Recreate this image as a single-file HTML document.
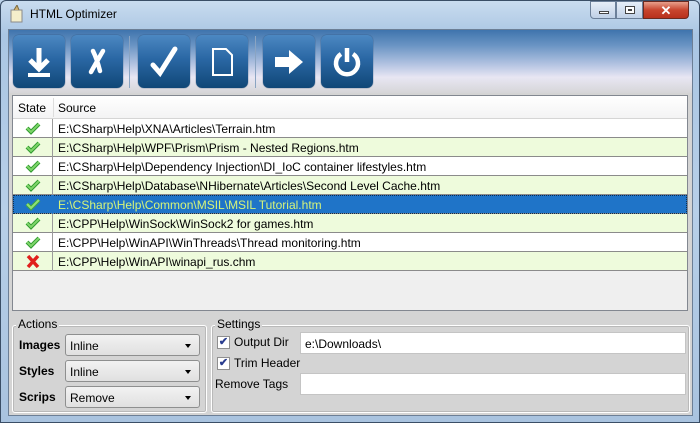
<!DOCTYPE html>
<html><head><style>
*{margin:0;padding:0;box-sizing:border-box}
body{width:700px;height:423px;overflow:hidden;font-family:"Liberation Sans",sans-serif;font-size:11.5px;color:#000;background:#bcd3ea;position:relative}
.frame{position:absolute;left:0;top:0;width:700px;height:423px;border-radius:6px 6px 0 0;background:linear-gradient(180deg,#c9dcef 0%,#aac6e3 8%,#b7cfe8 50%,#a9c3df 100%);border:1px solid #3a4e66}
.title{position:absolute;left:30px;top:7px;font-size:12px;color:#000}
.client{position:absolute;left:8px;top:29px;width:685px;height:387px;background:#d4d4d4;border:1px solid #6c7f96}
.tb{position:absolute;left:0;top:0;width:683px;height:63px;background:linear-gradient(180deg,#3f74ad 0%,#6b95c4 25%,#b4c4e2 55%,#e8e6f3 75%,#d6d6d8 100%)}
.btn{position:absolute;top:5px;width:52px;height:53px;border-radius:6px;background:linear-gradient(180deg,#4c88c2 0%,#2a67a4 45%,#104777 100%);box-shadow:0 0 1px #1b3c60}
.sep{position:absolute;top:6px;width:1px;height:52px;background:#8aa4c2}
.list{position:absolute;left:3px;top:65px;width:676px;height:216px;background:#efefef;border:1px solid #828790}
.hdr{position:absolute;left:0;top:0;width:674px;height:23px;background:linear-gradient(#fff,#f3f3f4);border-bottom:1px solid #d5d5d5;font-size:12px}
.hdr span{position:absolute;top:5px}
.row{position:absolute;left:0;width:674px;height:19px;border-bottom:1px solid #8b8b8b}
.row .t{position:absolute;left:45px;top:3px;white-space:nowrap;font-size:12px}
.row .c{position:absolute;left:39px;top:0;width:1px;height:19px;background:#9a9a9a}
.row svg{position:absolute;left:12px;top:2px}
.w{background:#fff}.g{background:#eefbdc}
.s{background:#1f74c8;color:#d6f47a;outline:1px dotted #0c2c50;outline-offset:-1px}
.gb{position:absolute;border:1px solid #fff;box-shadow:inset 0 0 0 1px #b9b9b9;border-radius:3px}
.gl{position:absolute;background:#d4d4d4;padding:0 2px;font-size:12px}
.lbl{position:absolute;font-weight:bold;font-size:12px}
.sel{position:absolute;left:56px;width:135px;height:22px;border:1px solid #8e8f8f;border-radius:3px;background:linear-gradient(#f2f2f2,#e0e0e0);padding:4px 0 0 4px;font-size:12px}
.sel:after{content:"";position:absolute;right:8px;top:9px;border:3.5px solid transparent;border-top:4px solid #000}
.chk{position:absolute;width:13px;height:13px;border:1px solid #8f8f8f;background:#fff;font-size:11px;line-height:11px;text-align:center;color:#2a3d8f;font-weight:bold}
.tx{position:absolute;background:#fff;border:1px solid #c4c4c4;height:22px;padding:4px 4px;font-size:12px}
</style></head><body>
<div class="frame"></div>
<svg style="position:absolute;left:9px;top:5px" width="16" height="18"><rect x="2" y="5" width="11" height="12" fill="#f4eecb" stroke="#8a8a8a"/><path d="M5 5 L8 0 L10 5" fill="#d0b070" stroke="#7a6a40"/></svg>
<div class="title">HTML Optimizer</div>
<div style="position:absolute;left:590px;top:1px;width:26px;height:18px;border:1px solid #6b7f99;border-radius:0 0 0 4px;background:linear-gradient(#e6eef8,#bfd0e6)"><div style="position:absolute;left:8px;top:9px;width:10px;height:3px;border:1px solid #444;background:#fff"></div></div>
<div style="position:absolute;left:616px;top:1px;width:27px;height:18px;border:1px solid #6b7f99;background:linear-gradient(#e6eef8,#bfd0e6)"><div style="position:absolute;left:8px;top:4px;width:10px;height:8px;border:1px solid #444;background:#fff"><div style="position:absolute;left:2px;top:2px;width:4px;height:2px;border:1px solid #444"></div></div></div>
<div style="position:absolute;left:643px;top:1px;width:46px;height:18px;border:1px solid #6b2a20;border-radius:0 0 4px 0;background:linear-gradient(#e8a08c,#c8452e 50%,#b8301c);color:#fff;font-weight:bold;text-align:center;font-size:13px;line-height:17px">✕</div>
<div class="client">
 <div class="tb">
  <div class="btn" style="left:4px"><svg width="52" height="53"><path d="M26 13 V33 M17 25 L26 34 L35 25" stroke="#fff" stroke-width="5" fill="none"/><rect x="15" y="38" width="22" height="4" fill="#fff"/></svg></div>
  <div class="btn" style="left:62px"><svg width="52" height="53"><path d="M22 16 Q26 24 29 36 M32 16 Q25 28 20 37" stroke="#fff" stroke-width="4.5" fill="none" stroke-linecap="round"/></svg></div>
  <div class="sep" style="left:120px"></div>
  <div class="btn" style="left:129px"><svg width="52" height="53"><path d="M15 30 L22 38 L37 14" stroke="#fff" stroke-width="5" fill="none" stroke-linecap="round"/></svg></div>
  <div class="btn" style="left:187px"><svg width="52" height="53"><path d="M17 14 H30 L36 20 V40 H17 Z" stroke="#fff" stroke-width="2" fill="none"/></svg></div>
  <div class="sep" style="left:246px"></div>
  <div class="btn" style="left:254px"><svg width="52" height="53"><path d="M12 22 H26 V15 L40 27 L26 39 V32 H12 Z" fill="#fff"/></svg></div>
  <div class="btn" style="left:312px"><svg width="52" height="53"><path d="M20 19 A11 11 0 1 0 32 19" stroke="#fff" stroke-width="4.5" fill="none"/><path d="M26 13 V27" stroke="#fff" stroke-width="4.5"/></svg></div>
 </div>
 <div class="list">
  <div class="hdr"><span style="left:5px">State</span><span style="left:40px;top:2px;width:1px;height:19px;background:#ddd"></span><span style="left:45px">Source</span></div>
  <div class="row w" style="top:23px"><svg width="16" height="14"><path d="M2 7 L6 11 L14 3" stroke="#2f9a2f" stroke-width="4" fill="none"/><path d="M2 7 L6 11 L14 3" stroke="#7fd66a" stroke-width="2" fill="none"/></svg><span class="c"></span><span class="t">E:\CSharp\Help\XNA\Articles\Terrain.htm</span></div>
  <div class="row g" style="top:42px"><svg width="16" height="14"><path d="M2 7 L6 11 L14 3" stroke="#2f9a2f" stroke-width="4" fill="none"/><path d="M2 7 L6 11 L14 3" stroke="#7fd66a" stroke-width="2" fill="none"/></svg><span class="c"></span><span class="t">E:\CSharp\Help\WPF\Prism\Prism - Nested Regions.htm</span></div>
  <div class="row w" style="top:61px"><svg width="16" height="14"><path d="M2 7 L6 11 L14 3" stroke="#2f9a2f" stroke-width="4" fill="none"/><path d="M2 7 L6 11 L14 3" stroke="#7fd66a" stroke-width="2" fill="none"/></svg><span class="c"></span><span class="t">E:\CSharp\Help\Dependency Injection\DI_IoC container lifestyles.htm</span></div>
  <div class="row g" style="top:80px"><svg width="16" height="14"><path d="M2 7 L6 11 L14 3" stroke="#2f9a2f" stroke-width="4" fill="none"/><path d="M2 7 L6 11 L14 3" stroke="#7fd66a" stroke-width="2" fill="none"/></svg><span class="c"></span><span class="t">E:\CSharp\Help\Database\NHibernate\Articles\Second Level Cache.htm</span></div>
  <div class="row s" style="top:99px"><svg width="16" height="14"><path d="M2 7 L6 11 L14 3" stroke="#3fa83f" stroke-width="4" fill="none"/><path d="M2 7 L6 11 L14 3" stroke="#8fe07a" stroke-width="2" fill="none"/></svg><span class="c" style="background:#1f74c8"></span><span class="t">E:\CSharp\Help\Common\MSIL\MSIL Tutorial.htm</span></div>
  <div class="row g" style="top:118px"><svg width="16" height="14"><path d="M2 7 L6 11 L14 3" stroke="#2f9a2f" stroke-width="4" fill="none"/><path d="M2 7 L6 11 L14 3" stroke="#7fd66a" stroke-width="2" fill="none"/></svg><span class="c"></span><span class="t">E:\CPP\Help\WinSock\WinSock2 for games.htm</span></div>
  <div class="row w" style="top:137px"><svg width="16" height="14"><path d="M2 7 L6 11 L14 3" stroke="#2f9a2f" stroke-width="4" fill="none"/><path d="M2 7 L6 11 L14 3" stroke="#7fd66a" stroke-width="2" fill="none"/></svg><span class="c"></span><span class="t">E:\CPP\Help\WinAPI\WinThreads\Thread monitoring.htm</span></div>
  <div class="row g" style="top:156px"><svg width="16" height="15"><path d="M3 2 L13 13 M13 2 L3 13" stroke="#e0201c" stroke-width="3.5"/></svg><span class="c"></span><span class="t">E:\CPP\Help\WinAPI\winapi_rus.chm</span></div>
 </div>
 <div class="gb" style="left:3px;top:295px;width:195px;height:88px"></div>
 <div class="gl" style="left:7px;top:287px">Actions</div>
 <div class="lbl" style="left:10px;top:308px">Images</div><div class="sel" style="top:304px">Inline</div>
 <div class="lbl" style="left:10px;top:334px">Styles</div><div class="sel" style="top:330px">Inline</div>
 <div class="lbl" style="left:10px;top:360px">Scrips</div><div class="sel" style="top:356px">Remove</div>
 <div class="gb" style="left:202px;top:295px;width:479px;height:88px"></div>
 <div class="gl" style="left:206px;top:287px">Settings</div>
 <div class="chk" style="left:208px;top:306px">✔</div><div style="position:absolute;left:225px;top:305px;font-size:12px">Output Dir</div>
 <div class="tx" style="left:291px;top:302px;width:386px">e:\Downloads\</div>
 <div class="chk" style="left:208px;top:327px">✔</div><div style="position:absolute;left:225px;top:326px;font-size:12px">Trim Header</div>
 <div style="position:absolute;left:206px;top:347px;font-size:12px">Remove Tags</div>
 <div class="tx" style="left:291px;top:343px;width:386px"></div>
</div>
</body></html>
